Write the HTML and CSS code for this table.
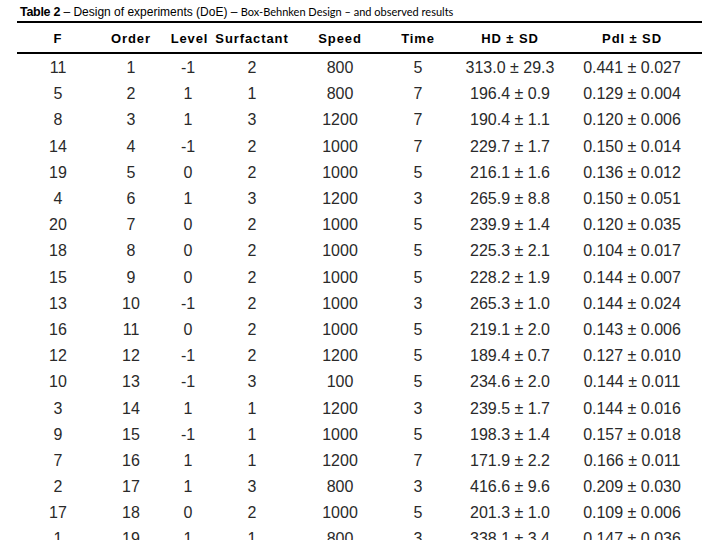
FILE: index.html
```html
<!DOCTYPE html>
<html>
<head>
<meta charset="utf-8">
<link rel="stylesheet" href="styles.css">
</head>
<body>
<div class="page">
  <p class="caption"><b class="cap-num">Table 2</b><span class="cap-main"> – Design of experiments (DoE) – </span><span class="cap-sub">Box-Behnken Design – and observed results</span></p>
  <table class="doe">
    <colgroup>
      <col class="c-f"><col class="c-order"><col class="c-level"><col class="c-surf"><col class="c-speed"><col class="c-time"><col class="c-hd"><col class="c-pdi">
    </colgroup>
    <thead>
      <tr><th>F</th><th>Order</th><th class="lvl">Level</th><th>Surfactant</th><th>Speed</th><th>Time</th><th>HD ± SD</th><th class="last">PdI ± SD</th></tr>
    </thead>
    <tbody>
      <tr><td>11</td><td>1</td><td>-1</td><td>2</td><td>800</td><td>5</td><td>313.0 ± 29.3</td><td class="last">0.441 ± 0.027</td></tr>
      <tr><td>5</td><td>2</td><td>1</td><td>1</td><td>800</td><td>7</td><td>196.4 ± 0.9</td><td class="last">0.129 ± 0.004</td></tr>
      <tr><td>8</td><td>3</td><td>1</td><td>3</td><td>1200</td><td>7</td><td>190.4 ± 1.1</td><td class="last">0.120 ± 0.006</td></tr>
      <tr><td>14</td><td>4</td><td>-1</td><td>2</td><td>1000</td><td>7</td><td>229.7 ± 1.7</td><td class="last">0.150 ± 0.014</td></tr>
      <tr><td>19</td><td>5</td><td>0</td><td>2</td><td>1000</td><td>5</td><td>216.1 ± 1.6</td><td class="last">0.136 ± 0.012</td></tr>
      <tr><td>4</td><td>6</td><td>1</td><td>3</td><td>1200</td><td>3</td><td>265.9 ± 8.8</td><td class="last">0.150 ± 0.051</td></tr>
      <tr><td>20</td><td>7</td><td>0</td><td>2</td><td>1000</td><td>5</td><td>239.9 ± 1.4</td><td class="last">0.120 ± 0.035</td></tr>
      <tr><td>18</td><td>8</td><td>0</td><td>2</td><td>1000</td><td>5</td><td>225.3 ± 2.1</td><td class="last">0.104 ± 0.017</td></tr>
      <tr><td>15</td><td>9</td><td>0</td><td>2</td><td>1000</td><td>5</td><td>228.2 ± 1.9</td><td class="last">0.144 ± 0.007</td></tr>
      <tr><td>13</td><td>10</td><td>-1</td><td>2</td><td>1000</td><td>3</td><td>265.3 ± 1.0</td><td class="last">0.144 ± 0.024</td></tr>
      <tr><td>16</td><td>11</td><td>0</td><td>2</td><td>1000</td><td>5</td><td>219.1 ± 2.0</td><td class="last">0.143 ± 0.006</td></tr>
      <tr><td>12</td><td>12</td><td>-1</td><td>2</td><td>1200</td><td>5</td><td>189.4 ± 0.7</td><td class="last">0.127 ± 0.010</td></tr>
      <tr><td>10</td><td>13</td><td>-1</td><td>3</td><td>100</td><td>5</td><td>234.6 ± 2.0</td><td class="last">0.144 ± 0.011</td></tr>
      <tr><td>3</td><td>14</td><td>1</td><td>1</td><td>1200</td><td>3</td><td>239.5 ± 1.7</td><td class="last">0.144 ± 0.016</td></tr>
      <tr><td>9</td><td>15</td><td>-1</td><td>1</td><td>1000</td><td>5</td><td>198.3 ± 1.4</td><td class="last">0.157 ± 0.018</td></tr>
      <tr><td>7</td><td>16</td><td>1</td><td>1</td><td>1200</td><td>7</td><td>171.9 ± 2.2</td><td class="last">0.166 ± 0.011</td></tr>
      <tr><td>2</td><td>17</td><td>1</td><td>3</td><td>800</td><td>3</td><td>416.6 ± 9.6</td><td class="last">0.209 ± 0.030</td></tr>
      <tr><td>17</td><td>18</td><td>0</td><td>2</td><td>1000</td><td>5</td><td>201.3 ± 1.0</td><td class="last">0.109 ± 0.006</td></tr>
      <tr><td>1</td><td>19</td><td>1</td><td>1</td><td>800</td><td>3</td><td>338.1 ± 3.4</td><td class="last">0.147 ± 0.036</td></tr>
    </tbody>
  </table>
</div>
</body>
</html>
```
FILE: styles.css
```css
html, body {
  margin: 0;
  padding: 0;
  background: #ffffff;
}

.page {
  width: 720px;
  height: 540px;
  overflow: hidden;
  padding: 3px 0 0 17px;
  box-sizing: border-box;
}

.caption {
  margin: 0 0 0 3px;
  height: 18px;
  line-height: 16px;
  white-space: nowrap;
  color: #000;
}

.cap-num {
  font-family: "Liberation Sans", Arial, sans-serif;
  font-weight: bold;
  font-size: 12.5px;
  letter-spacing: -0.3px;
}

.cap-main {
  font-family: "Liberation Sans", Arial, sans-serif;
  font-size: 12px;
}

.cap-sub {
  font-family: Lato, "Open Sans", sans-serif;
  font-size: 11px;
}

.doe {
  width: 685px;
  table-layout: fixed;
  border-collapse: collapse;
  border-spacing: 0;
}

.c-f { width: 82px; }
.c-order { width: 64px; }
.c-level { width: 50px; }
.c-surf { width: 78px; }
.c-speed { width: 98px; }
.c-time { width: 58px; }
.c-hd { width: 126px; }
.c-pdi { width: 129px; }

.doe thead tr {
  border-top: 2px solid #000;
  border-bottom: 2px solid #000;
}

.doe th {
  height: 27px;
  padding: 2px 0 0 0;
  font-family: "Liberation Sans", Arial, sans-serif;
  font-weight: bold;
  font-size: 13px;
  letter-spacing: 0.9px;
  text-align: center;
  color: #000;
  vertical-align: middle;
}

.doe th.lvl {
  padding-left: 3px;
}

.doe td {
  height: 24.2px;
  padding: 2px 0 0 0;
  font-family: "Liberation Sans", Arial, sans-serif;
  font-size: 16px;
  text-align: center;
  vertical-align: middle;
  color: #2a2a2a;
  white-space: nowrap;
}

.doe .last {
  padding-right: 11px;
}
```
